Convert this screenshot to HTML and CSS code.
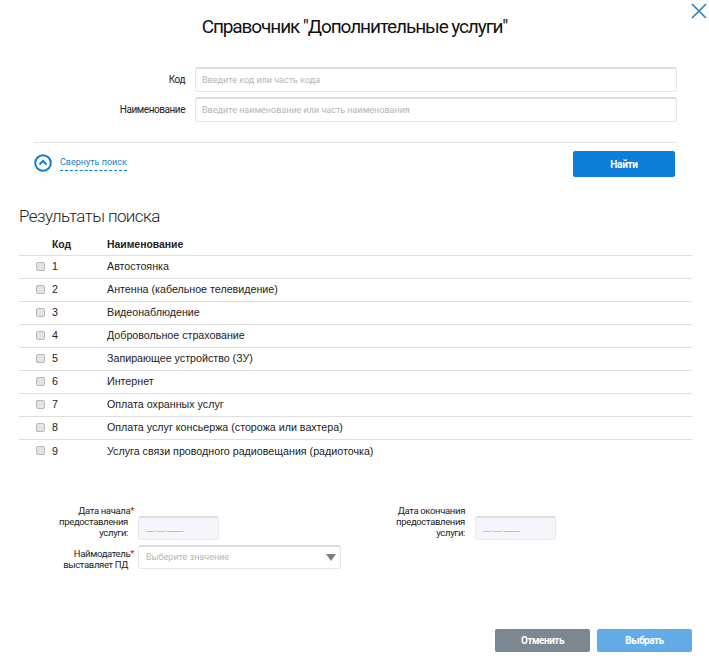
FILE: index.html
```html
<!DOCTYPE html>
<html lang="ru">
<head>
  <meta charset="UTF-8" />
  <title>Справочник "Дополнительные услуги"</title>
  <link rel="stylesheet" href="styles.css">
</head>
<body>
  <div class="dialog">
    <a class="close-btn" href="#">
      <svg width="16" height="16" viewBox="0 0 16 16"><path d="M1 1L15 15M15 1L1 15" stroke="#2a7fc0" stroke-width="1.6" fill="none"/></svg>
    </a>
    <h1 class="title">Справочник "Дополнительные услуги"</h1>

    <div class="search-form">
      <div class="field-row">
        <label class="field-label">Код</label>
        <div class="text-input">Введите код или часть кода</div>
      </div>
      <div class="field-row">
        <label class="field-label">Наименование</label>
        <div class="text-input">Введите наименование или часть наименования</div>
      </div>
    </div>

    <div class="search-bar">
      <div class="toggle">
        <svg width="18" height="18" viewBox="0 0 18 18"><circle cx="9" cy="9" r="7.8" stroke="#0d7ed8" stroke-width="2" fill="none"/><path d="M5.5 10.5L9 7L12.5 10.5" stroke="#0d7ed8" stroke-width="2" fill="none"/></svg>
        <a class="toggle-link" href="#">Свернуть поиск</a>
      </div>
      <button class="find-btn">Найти</button>
    </div>

    <h2 class="results-title">Результаты поиска</h2>

    <div class="results">
      <div class="row head"><span class="cell-check"></span><span class="cell-code">Код</span><span>Наименование</span></div>
      <div class="row"><span class="cell-check"><i class="check"></i></span><span class="cell-code">1</span><span>Автостоянка</span></div>
      <div class="row"><span class="cell-check"><i class="check"></i></span><span class="cell-code">2</span><span>Антенна (кабельное телевидение)</span></div>
      <div class="row"><span class="cell-check"><i class="check"></i></span><span class="cell-code">3</span><span>Видеонаблюдение</span></div>
      <div class="row"><span class="cell-check"><i class="check"></i></span><span class="cell-code">4</span><span>Добровольное страхование</span></div>
      <div class="row"><span class="cell-check"><i class="check"></i></span><span class="cell-code">5</span><span>Запирающее устройство (ЗУ)</span></div>
      <div class="row"><span class="cell-check"><i class="check"></i></span><span class="cell-code">6</span><span>Интернет</span></div>
      <div class="row"><span class="cell-check"><i class="check"></i></span><span class="cell-code">7</span><span>Оплата охранных услуг</span></div>
      <div class="row"><span class="cell-check"><i class="check"></i></span><span class="cell-code">8</span><span>Оплата услуг консьержа (сторожа или вахтера)</span></div>
      <div class="row last"><span class="cell-check"><i class="check"></i></span><span class="cell-code">9</span><span>Услуга связи проводного радиовещания (радиоточка)</span></div>
    </div>

    <div class="extra-form">
      <div class="extra-row dates">
        <div class="extra-label">Дата начала<b class="req">*</b><br>предоставления<br>услуги:</div>
        <div class="date-input">__.__.____</div>
        <div class="extra-label second">Дата окончания<br>предоставления<br>услуги:</div>
        <div class="date-input">__.__.____</div>
      </div>
      <div class="extra-row owner">
        <div class="extra-label">Наймодатель<b class="req">*</b><br>выставляет ПД</div>
        <div class="select-input">Выберите значение<i class="arrow"></i></div>
      </div>
    </div>

    <div class="actions">
      <button class="cancel-btn">Отменить</button>
      <button class="choose-btn">Выбрать</button>
    </div>
  </div>
</body>
</html>
```

FILE: styles.css
```css
html, body {
  margin: 0;
  padding: 0;
  background-color: #fff;
}
body {
  font-family: Roboto, "Liberation Sans", sans-serif;
  color: #222;
}
.dialog {
  position: relative;
  width: 709px;
  height: 662px;
  overflow: hidden;
}
.close-btn {
  position: absolute;
  top: 3px;
  right: 2px;
  line-height: 0;
}
.title {
  margin: 0;
  padding-top: 15px;
  height: 52px;
  font-size: 19px;
  line-height: 24px;
  font-weight: 400;
  text-align: center;
  letter-spacing: -1.1px;
  color: #111;
}
.search-form {
  display: flex;
  flex-direction: column;
  gap: 5px;
  padding-right: 32px;
}
.field-row {
  display: flex;
  align-items: center;
  gap: 10px;
}
.field-label {
  width: 185px;
  text-align: right;
  font-size: 10px;
  letter-spacing: -0.45px;
}
.text-input {
  flex: 1;
  height: 22px;
  line-height: 22px;
  padding-left: 6px;
  border: 1px solid #e4e6e8;
  border-top: 2px solid #dcdcdc;
  border-radius: 3px;
  font-size: 9px;
  color: #b5b5b5;
}
.search-bar {
  display: flex;
  justify-content: space-between;
  align-items: flex-start;
  margin: 20px 32px 0 34px;
  padding-top: 8px;
  border-top: 1px solid #e5e5e5;
}
.toggle {
  display: flex;
  align-items: center;
  gap: 8px;
  margin-top: 3px;
}
.toggle-link {
  font-size: 9px;
  line-height: 15px;
  color: #1a7fd0;
  text-decoration: none;
  border-bottom: 1px dashed #0d7ed8;
}
.find-btn {
  width: 102px;
  height: 26px;
  margin-right: 2px;
  border: none;
  border-radius: 2px;
  background-color: #0d7ed8;
  color: #fff;
  font-family: inherit;
  font-size: 10px;
  font-weight: 700;
  letter-spacing: -0.3px;
}
.results-title {
  margin: 28px 0 0 19px;
  font-size: 17px;
  line-height: 22px;
  font-weight: 300;
  letter-spacing: -0.6px;
  color: #222;
}
.results {
  margin: 6px 17px 0 19px;
  font-family: "Liberation Sans", Arial, sans-serif;
  font-size: 10.7px;
}
.row {
  display: flex;
  align-items: center;
  height: 23px;
  padding-bottom: 2px;
  box-sizing: border-box;
  border-bottom: 1px solid #dedede;
}
.row.head {
  font-size: 10.4px;
  font-weight: 700;
  padding-bottom: 0;
}
.row.last {
  border-bottom: none;
}
.cell-check {
  width: 33px;
  padding-left: 17px;
  box-sizing: border-box;
  line-height: 0;
}
.cell-code {
  width: 55px;
}
.check {
  display: inline-block;
  width: 7px;
  height: 7px;
  background-color: #e3e3e3;
  border: 1px solid #b8b8b8;
  border-radius: 2px;
}
.extra-form {
  margin-top: 42px;
  display: flex;
  flex-direction: column;
  gap: 5px;
}
.extra-row {
  display: flex;
  align-items: flex-end;
}
.extra-row.owner {
  align-items: flex-start;
}
.extra-label {
  width: 128px;
  text-align: right;
  font-size: 9.5px;
  line-height: 11px;
  letter-spacing: -0.35px;
  padding-right: 10px;
  padding-bottom: 2px;
  color: #222;
}
.extra-row.owner .extra-label {
  padding-top: 3px;
  padding-bottom: 0;
}
.extra-label.second {
  width: 90px;
  padding-left: 156px;
}
.req {
  margin-right: -6px;
  color: #d0021b;
  font-weight: 400;
}
.date-input {
  width: 72px;
  height: 21px;
  line-height: 21px;
  padding-left: 7px;
  border: 1px solid #e6e9ee;
  border-top: 2px solid #dcdee2;
  border-radius: 3px;
  background-color: #f4f6fb;
  font-size: 9px;
  color: #aaa;
}
.select-input {
  position: relative;
  width: 194px;
  height: 21px;
  line-height: 21px;
  padding-left: 7px;
  border: 1px solid #e4e6e8;
  border-top: 2px solid #dcdcdc;
  border-radius: 3px;
  font-size: 9px;
  color: #b5b5b5;
}
.arrow {
  position: absolute;
  right: 4px;
  top: 7px;
  border-left: 5px solid transparent;
  border-right: 5px solid transparent;
  border-top: 7px solid #808080;
}
.actions {
  position: absolute;
  top: 629px;
  right: 17px;
  display: flex;
  gap: 7px;
}
.actions button {
  width: 95px;
  height: 23px;
  border: none;
  border-radius: 2px;
  color: #fff;
  font-family: inherit;
  font-size: 10px;
  font-weight: 700;
  letter-spacing: -0.5px;
}
.cancel-btn {
  background-color: #7b8791;
}
.choose-btn {
  background-color: #63abe6;
}
```
